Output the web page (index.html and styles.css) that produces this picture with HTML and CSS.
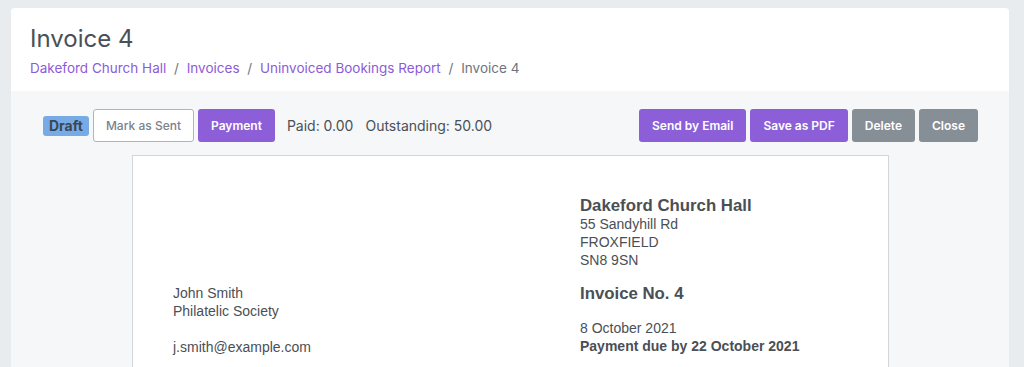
FILE: index.html
```html
<!DOCTYPE html>
<html>
<head>
    <title>Invoice 4</title>
    <link rel="stylesheet" href="styles.css">
</head>
<body>
    <div class="card">
        <div class="card-header">
            <h1>Invoice 4</h1>
            <nav class="breadcrumb">
                <a href="#">Dakeford Church Hall</a>
                <span class="sep">/</span>
                <a href="#">Invoices</a>
                <span class="sep">/</span>
                <a href="#">Uninvoiced Bookings Report</a>
                <span class="sep">/</span>
                <span class="current">Invoice 4</span>
            </nav>
        </div>

        <div class="card-body">
            <div class="toolbar">
                <div class="toolbar-left">
                    <span class="badge">Draft</span>
                    <button class="btn btn-outline">Mark as Sent</button>
                    <button class="btn btn-primary">Payment</button>
                    <span class="totals">Paid: 0.00</span>
                    <span class="totals">Outstanding: 50.00</span>
                </div>
                <div class="toolbar-right">
                    <button class="btn btn-primary">Send by Email</button>
                    <button class="btn btn-primary">Save as PDF</button>
                    <button class="btn btn-secondary">Delete</button>
                    <button class="btn btn-secondary">Close</button>
                </div>
            </div>

            <div class="paper">
                <div class="paper-row">
                    <div></div>
                    <div class="from">
                        <div class="org">Dakeford Church Hall</div>
                        <div>55 Sandyhill Rd</div>
                        <div>FROXFIELD</div>
                        <div>SN8 9SN</div>
                    </div>
                </div>
                <div class="paper-row second">
                    <div class="to">
                        <div>John Smith</div>
                        <div>Philatelic Society</div>
                        <div class="email">j.smith@example.com</div>
                    </div>
                    <div class="details">
                        <div class="invoice-no">Invoice No. 4</div>
                        <div class="date">8 October 2021</div>
                        <div class="due">Payment due by 22 October 2021</div>
                    </div>
                </div>
            </div>
        </div>
    </div>
</body>
</html>
```

FILE: styles.css
```css
body {
  margin: 0;
  padding: 8px 15px 0 11px;
  background-color: #e9ecef;
  font-family: Inter, "Noto Sans", sans-serif;
  color: #495057;
  height: 367px;
  box-sizing: border-box;
  overflow: hidden;
}

.card {
  background-color: #f6f7f9;
  border-radius: 4px 4px 0 0;
  height: 100%;
  overflow: hidden;
}

.card-header {
  background-color: #fff;
  padding: 16px 19px 13px;
}

h1 {
  margin: 0;
  font-size: 24px;
  font-weight: 400;
  line-height: 29px;
  color: #495057;
}

.breadcrumb {
  margin-top: 5px;
  font-size: 13.5px;
  line-height: 20px;
}

.breadcrumb a {
  color: #8c5cd8;
  text-decoration: none;
}

.breadcrumb .sep {
  color: #6c757d;
  margin: 0 4px;
}

.breadcrumb .current {
  color: #6c757d;
}

.card-body {
  padding: 18px 31px 0 32px;
}

.toolbar {
  display: flex;
  justify-content: space-between;
  align-items: center;
}

.toolbar-left,
.toolbar-right {
  display: flex;
  align-items: center;
  gap: 4px;
}

.badge {
  display: inline-block;
  background-color: #77abe6;
  color: #3b4754;
  font-weight: 700;
  font-size: 14px;
  line-height: 20px;
  padding: 0 6px;
  border-radius: 3px;
}

.btn {
  height: 33px;
  padding: 0 12px;
  font-family: Inter, "Noto Sans", sans-serif;
  font-size: 12px;
  font-weight: 600;
  border-radius: 3px;
  border: 1px solid transparent;
  cursor: pointer;
}

.btn-outline {
  background-color: #fff;
  border-color: #adb5bd;
  color: #7a828a;
  font-weight: 500;
}

.btn-primary {
  background-color: #8c5fd8;
  color: #fff;
}

.btn-secondary {
  background-color: #868e96;
  color: #fff;
}

.totals {
  font-size: 14px;
  margin-left: 8px;
}

.paper {
  width: 757px;
  box-sizing: border-box;
  margin: 13px auto 0;
  background-color: #fff;
  border: 1px solid #d3d6d9;
  padding: 41px 40px 40px;
  font-family: "Liberation Sans", Arial, sans-serif;
  font-size: 14px;
  line-height: 18px;
  color: #4a4f55;
}

.paper-row {
  display: grid;
  grid-template-columns: 1fr 268px;
}

.paper-row.second {
  margin-top: 15px;
}

.org {
  font-size: 16.8px;
  font-weight: 700;
}

.invoice-no {
  font-size: 16.8px;
  line-height: 20px;
  font-weight: 700;
}

.date {
  margin-top: 15px;
}

.due {
  font-weight: 700;
}

.email {
  margin-top: 18px;
}
```
